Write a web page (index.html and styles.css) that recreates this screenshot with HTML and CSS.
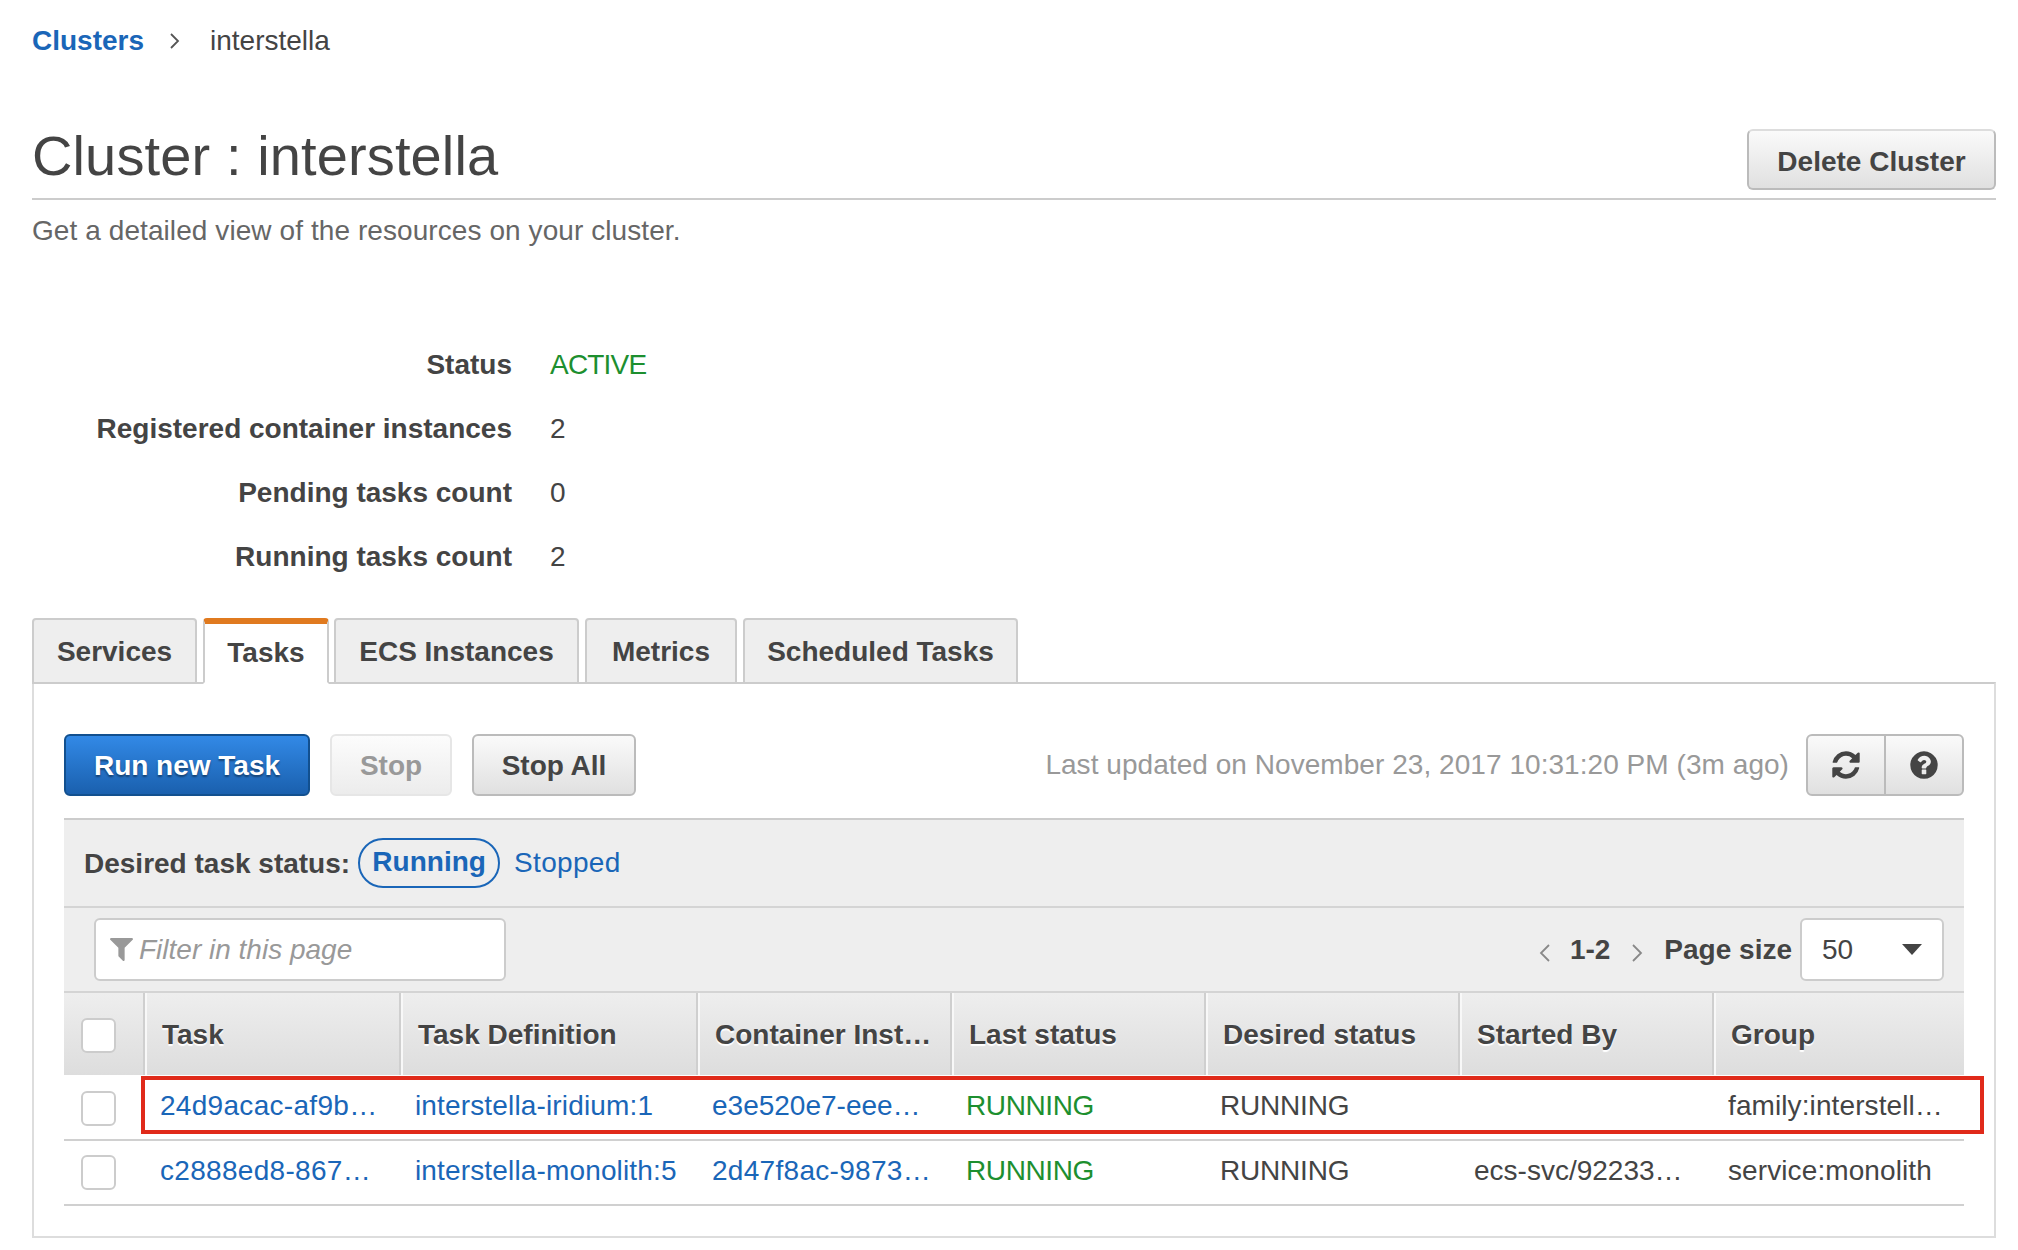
FILE: index.html
```html
<!DOCTYPE html>
<html lang="en">

<head>
    <meta charset="UTF-8">
    <title>Cluster : interstella</title>
    <link rel="stylesheet" href="styles.css">
</head>

<body>
    <div class="breadcrumb">
        <a class="crumbLink">Clusters</a>
        <svg class="crumbArrow" viewBox="0 0 12 18"><path d="M2 2l7 7-7 7" /></svg>
        <span>interstella</span>
    </div>

    <div class="pageHead">
        <h1 class="pageTitle">Cluster : interstella</h1>
        <button class="btn deleteBtn">Delete Cluster</button>
    </div>
    <p class="subTitle">Get a detailed view of the resources on your cluster.</p>

    <div class="details">
        <div class="detailLabel">Status</div>
        <div class="active activeStatus">ACTIVE</div>
        <div class="detailLabel">Registered container instances</div>
        <div>2</div>
        <div class="detailLabel">Pending tasks count</div>
        <div>0</div>
        <div class="detailLabel">Running tasks count</div>
        <div>2</div>
    </div>

    <div class="tabs">
        <div class="tab servicesTab">Services</div>
        <div class="tab tabActive">Tasks</div>
        <div class="tab ecsTab">ECS Instances</div>
        <div class="tab metricsTab">Metrics</div>
        <div class="tab scheduledTab">Scheduled Tasks</div>
    </div>

    <div class="panel">
        <div class="toolbar">
            <button class="btn btnPrimary runBtn">Run new Task</button>
            <button class="btn btnDisabled stopBtn">Stop</button>
            <button class="btn stopAllBtn">Stop All</button>
            <span class="updated">Last updated on November 23, 2017 10:31:20 PM (3m ago)</span>
            <div class="iconGroup">
                <button class="btn iconBtn">
                    <svg class="icon" viewBox="0 0 1792 1792"><path d="M1639 1056q0 5-1 7-64 268-268 434.500t-478 166.500q-146 0-282.500-55t-243.500-157l-129 129q-19 19-45 19t-45-19-19-45v-448q0-26 19-45t45-19h448q26 0 45 19t19 45-19 45l-137 137q71 66 161 102t187 36q134 0 250-65t186-179q11-17 53-117 8-23 30-23h192q13 0 22.500 9.500t9.500 22.500zm25-800v448q0 26-19 45t-45 19h-448q-26 0-45-19t-19-45 19-45l138-138q-148-137-349-137-134 0-250 65t-186 179q-11 17-53 117-8 23-30 23h-199q-13 0-22.500-9.500t-9.500-22.500v-7q65-268 270-434.500t480-166.500q146 0 284 55.500t245 156.500l130-129q19-19 45-19t45 19 19 45z" /></svg>
                </button>
                <button class="btn iconBtn">
                    <svg class="icon" viewBox="0 0 1792 1792"><path d="M1024 1376v-192q0-14-9-23t-23-9h-192q-14 0-23 9t-9 23v192q0 14 9 23t23 9h192q14 0 23-9t9-23zm256-672q0-88-55.500-163t-138.500-116-170-41q-243 0-371 213-15 24 8 42l132 100q7 6 19 6 16 0 25-12 53-68 86-92 34-24 86-24 48 0 85.500 26t37.500 59q0 38-20 61t-68 45q-63 28-115.500 86.500t-52.500 125.500v36q0 14 9 23t23 9h192q14 0 23-9t9-23q0-19 21.500-49.500t54.500-49.500q32-18 49-28.500t46-35 44.500-48 28-60.500 12.500-81zm384 192q0 209-103 385.500t-279.500 279.500-385.500 103-385.500-103-279.500-279.500-103-385.500 103-385.500 279.500-279.500 385.500-103 385.500 103 279.500 279.500 103 385.500z" /></svg>
                </button>
            </div>
        </div>

        <div class="statusBar">
            <span class="statusLabel">Desired task status:</span>
            <a class="pill">Running</a>
            <a class="stoppedLink">Stopped</a>
        </div>

        <div class="filterBar">
            <div class="filterBox">
                <svg class="filterIcon" viewBox="192 256 1408 1408"><path d="M1595 295q17 41-14 70l-493 493v742q0 42-39 59-13 5-25 5-27 0-45-19l-256-256q-19-19-19-45v-486l-493-493q-31-29-14-70 17-39 59-39h1280q42 0 59 39z" /></svg>
                <span>Filter in this page</span>
            </div>
            <div class="pager">
                <svg class="pageArrow" viewBox="0 0 12 18"><path d="M11 1L3 9l8 8" /></svg>
                <b class="pageRange">1-2</b>
                <svg class="pageArrow" viewBox="0 0 12 18"><path d="M1 1l8 8-8 8" /></svg>
                <b class="pageSizeLabel">Page size</b>
                <div class="pageSelect"><span>50</span><i class="caret"></i></div>
            </div>
        </div>

        <div class="tableWrap">
            <table class="taskTable">
                <colgroup>
                    <col class="colCheck">
                    <col class="colTask">
                    <col class="colDef">
                    <col class="colRest">
                    <col class="colRest">
                    <col class="colRest">
                    <col class="colRest">
                    <col>
                </colgroup>
                <thead>
                    <tr>
                        <th><span class="checkBox"></span></th>
                        <th>Task</th>
                        <th>Task Definition</th>
                        <th>Container Inst…</th>
                        <th>Last status</th>
                        <th>Desired status</th>
                        <th>Started By</th>
                        <th>Group</th>
                    </tr>
                </thead>
                <tbody>
                    <tr>
                        <td><span class="checkBox"></span></td>
                        <td class="taskCell"><a class="hash">24d9acac-af9b…</a></td>
                        <td><a class="defLink">interstella-iridium:1</a></td>
                        <td><a>e3e520e7-eee…</a></td>
                        <td class="active">RUNNING</td>
                        <td class="status">RUNNING</td>
                        <td></td>
                        <td class="groupCell">family:interstell…</td>
                    </tr>
                    <tr>
                        <td><span class="checkBox"></span></td>
                        <td class="taskCell"><a class="hash">c2888ed8-867…</a></td>
                        <td><a class="defLink">interstella-monolith:5</a></td>
                        <td><a class="hash">2d47f8ac-9873…</a></td>
                        <td class="active">RUNNING</td>
                        <td class="status">RUNNING</td>
                        <td>ecs-svc/92233…</td>
                        <td class="groupCell">service:monolith</td>
                    </tr>
                </tbody>
            </table>
            <div class="redBox"></div>
        </div>
    </div>
</body>

</html>
```

FILE: styles.css
```css
* {
    margin: 0;
    padding: 0;
    box-sizing: border-box;
}

body {
    padding: 0 22px 0 32px;
    background-color: white;
    color: #444;
    font-family: "Liberation Sans", Arial, sans-serif;
    font-size: 28px;
    line-height: 36px;
}

a {
    color: #1a66b8;
}

/* top of page */

.breadcrumb {
    display: flex;
    align-items: center;
    padding-top: 23px;
}

.crumbLink {
    font-weight: bold;
}

.crumbArrow {
    width: 12px;
    height: 18px;
    margin: 0 29px 0 25px;
}

.crumbArrow path {
    fill: none;
    stroke: #555;
    stroke-width: 1.8;
}

.pageHead {
    display: flex;
    justify-content: space-between;
    align-items: flex-end;
    height: 141px;
    padding-bottom: 8px;
    border-bottom: 2px solid #ccc;
}

.pageTitle {
    font-size: 56px;
    font-weight: normal;
    line-height: 64px;
    letter-spacing: 0.12px;
    margin-bottom: 2px;
}

.subTitle {
    margin-top: 13px;
    color: #666;
    letter-spacing: 0.08px;
}

.details {
    display: grid;
    grid-template-columns: 480px 1fr;
    grid-auto-rows: 64px;
    column-gap: 38px;
    align-items: center;
    margin-top: 84px;
}

.detailLabel {
    text-align: right;
    font-weight: bold;
}

.active {
    color: #1d8f2f;
    letter-spacing: -0.4px;
}

.activeStatus {
    letter-spacing: -0.8px;
}

/* buttons */

.btn {
    height: 62px;
    padding-top: 2px;
    border: 2px solid #bbb;
    border-radius: 6px;
    background: linear-gradient(#fafafa, #e0e0e0);
    color: #444;
    font-family: inherit;
    font-size: 28px;
    font-weight: bold;
}

.deleteBtn {
    width: 249px;
    height: 61px;
    padding-top: 4px;
    border-top-color: #ddd;
}

.btnPrimary {
    border-color: #12508f;
    background: linear-gradient(#3289e6, #1a60ae);
    color: white;
    text-shadow: 0 2px 2px rgba(0, 0, 0, 0.4);
}

.btnDisabled {
    border-color: #e6e6e6;
    background: linear-gradient(#fcfcfc, #ececec);
    color: #999;
}

.runBtn {
    width: 246px;
}

.stopBtn {
    width: 122px;
}

.stopAllBtn {
    width: 164px;
}

/* tabs */

.tabs {
    display: flex;
    gap: 6px;
    margin-top: 29px;
    margin-bottom: -2px;
}

.tab {
    height: 66px;
    border: 2px solid #ccc;
    border-radius: 4px 4px 0 0;
    background-color: #eee;
    font-weight: bold;
    line-height: 64px;
    text-align: center;
}

.servicesTab {
    width: 165px;
}

.tabActive {
    position: relative;
    width: 126px;
    margin-right: -1px;
    border-top: 6px solid #e07a1f;
    border-bottom-color: white;
    background-color: white;
    line-height: 58px;
}

.ecsTab {
    width: 245px;
}

.metricsTab {
    width: 152px;
}

.scheduledTab {
    width: 275px;
}

.panel {
    height: 556px;
    padding: 50px 30px 0;
    border: 2px solid #ddd;
    border-top-color: #ccc;
}

.toolbar {
    display: flex;
    align-items: center;
    gap: 20px;
    height: 62px;
}

.updated {
    margin-left: auto;
    color: #999;
    letter-spacing: 0.05px;
}

.iconGroup {
    display: flex;
    width: 158px;
    margin-left: -3px;
}

.iconBtn {
    display: flex;
    justify-content: center;
    align-items: center;
    width: 79px;
    padding-top: 0;
}

.iconBtn:first-child {
    border-right-width: 1px;
    border-radius: 6px 0 0 6px;
}

.iconBtn:last-child {
    border-left-width: 1px;
    border-radius: 0 6px 6px 0;
}

.icon {
    width: 32px;
    height: 32px;
    fill: #444;
}

/* gray bars above the table */

.statusBar {
    display: flex;
    align-items: center;
    height: 90px;
    margin-top: 22px;
    padding-left: 20px;
    border-top: 2px solid #ccc;
    border-bottom: 2px solid #d4d4d4;
    background-color: #eee;
}

.statusLabel {
    font-weight: bold;
    margin-top: 2px;
    margin-right: 8px;
}

.pill {
    width: 142px;
    height: 50px;
    border: 2px solid #1a66b8;
    border-radius: 25px;
    font-weight: bold;
    line-height: 44px;
    text-align: center;
    margin-right: 14px;
}

.stoppedLink {
    letter-spacing: 0.3px;
}

.filterBar {
    display: flex;
    justify-content: space-between;
    align-items: center;
    height: 85px;
    padding: 0 20px 0 30px;
    border-bottom: 2px solid #d4d4d4;
    background-color: #eee;
}

.filterBox {
    display: flex;
    align-items: center;
    width: 412px;
    height: 63px;
    padding-left: 14px;
    border: 2px solid #ccc;
    border-radius: 6px;
    background-color: white;
    color: #999;
    font-style: italic;
}

.filterIcon {
    width: 23px;
    height: 23px;
    margin-right: 6px;
    fill: #999;
}

.pager {
    display: flex;
    align-items: center;
}

.pageArrow {
    width: 12px;
    height: 18px;
    margin-top: 6px;
}

.pageArrow path {
    fill: none;
    stroke: #888;
    stroke-width: 1.8;
}

.pageRange {
    margin: 0 22px 0 20px;
}

.pageSizeLabel {
    margin: 0 8px 0 20px;
}

.pageSelect {
    display: flex;
    justify-content: space-between;
    align-items: center;
    width: 144px;
    height: 63px;
    padding: 0 20px;
    border: 2px solid #ccc;
    border-radius: 6px;
    background-color: white;
}

.caret {
    border-top: 11px solid #444;
    border-left: 10px solid transparent;
    border-right: 10px solid transparent;
}

/* table */

.tableWrap {
    position: relative;
}

.taskTable {
    width: 100%;
    table-layout: fixed;
    border-collapse: collapse;
}

.colCheck {
    width: 79px;
}

.colTask {
    width: 256px;
}

.colDef {
    width: 297px;
}

.colRest {
    width: 254px;
}

.taskTable th {
    height: 82px;
    padding: 2px 0 0 19px;
    background: linear-gradient(#eee, #ddd);
    box-shadow: inset 2px 0 0 #cfcfcf, inset 4px 0 0 #f8f8f8;
    text-align: left;
    text-shadow: 0 2px 1px white;
    white-space: nowrap;
}

.taskTable th:first-child {
    padding-left: 17px;
    box-shadow: none;
}

.taskTable td {
    height: 65px;
    padding: 0 0 2px 16px;
    border-bottom: 2px solid #d0d0d0;
    white-space: nowrap;
}

.taskTable tbody tr:last-child td {
    padding-bottom: 4px;
}

.taskTable td:first-child {
    padding: 2px 0 0 17px;
}

.taskTable tbody tr:last-child td:first-child {
    padding: 0 0 0 17px;
}

.taskTable td.taskCell {
    padding-left: 17px;
}

.hash {
    letter-spacing: 0.3px;
}

.defLink {
    letter-spacing: 0.15px;
}

.groupCell {
    letter-spacing: 0.1px;
}

.status {
    letter-spacing: -0.2px;
}

.checkBox {
    display: block;
    width: 35px;
    height: 35px;
    border: 2px solid #ccc;
    border-radius: 6px;
    background-color: white;
}

.redBox {
    position: absolute;
    top: 83px;
    left: 77px;
    width: 1843px;
    height: 58px;
    border: 4px solid #e02a1a;
}
```
